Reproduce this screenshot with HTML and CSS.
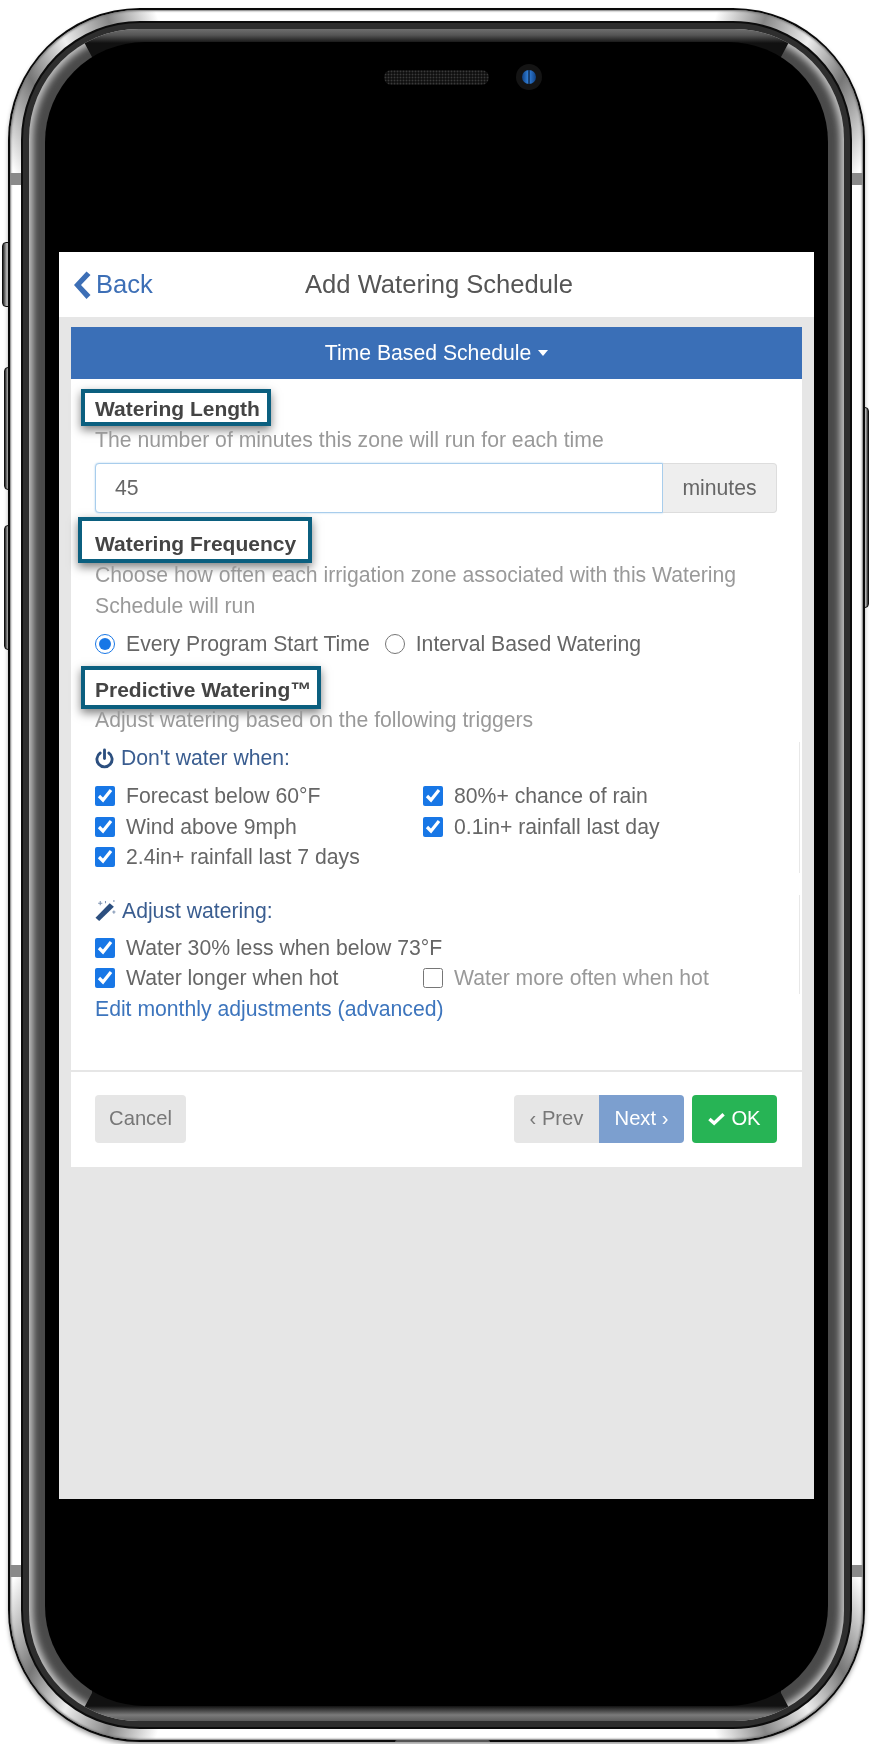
FILE: index.html
```html
<!DOCTYPE html>
<html lang="en">

<head>
	<meta charset="UTF-8">
	<meta name="viewport" content="width=device-width, initial-scale=1.0">
	<title>Add Watering Schedule</title>
	<link rel="stylesheet" href="styles.css">
</head>

<body>
	<div class="phone">
		<span class="side-btn side-btn-mute"></span>
		<span class="side-btn side-btn-up"></span>
		<span class="side-btn side-btn-down"></span>
		<span class="side-btn side-btn-power"></span>
		<div class="rim">
			<div class="band">
				<div class="glass">
					<div class="face">
						<div class="sensors">
							<span class="speaker"></span>
							<span class="camera"><span class="lens"></span></span>
						</div>
						<div class="screen">
							<header class="topbar">
								<a class="back">
									<svg class="back-icon" viewBox="0 0 18 28" aria-hidden="true">
										<path d="M13.5 0.5 L17.5 4 L8 14 L17.5 24 L13.5 28 L1 14 Z" />
									</svg>
									Back
								</a>
								<h1 class="title">Add Watering Schedule</h1>
								<span></span>
							</header>

							<div class="card">
								<div class="schedule-type">Time Based Schedule <span class="caret"></span></div>
								<div class="card-body">
									<h2 class="callout callout-length">Watering Length</h2>
									<p class="hint hint-length">The number of minutes this zone will run for each time</p>
									<div class="input-group">
										<input class="input" type="text" value="45">
										<span class="addon">minutes</span>
									</div>

									<h2 class="callout callout-frequency">Watering Frequency</h2>
									<p class="hint hint-frequency">Choose how often each irrigation zone associated with this Watering Schedule will run</p>
									<div class="radios">
										<label class="option"><input type="radio" name="freq" checked>Every Program Start Time</label>
										<label class="option"><input type="radio" name="freq">Interval Based Watering</label>
									</div>

									<h2 class="callout callout-predictive">Predictive Watering™</h2>
									<p class="hint hint-predictive">Adjust watering based on the following triggers</p>

									<section class="group">
										<h3 class="group-title">
											<svg class="group-icon" viewBox="0 0 20 22" aria-hidden="true">
												<path d="M10 2 V11" stroke-linecap="round" />
												<path d="M5.5 5.2 A8 8 0 1 0 14.5 5.2" stroke-linecap="round" />
											</svg>
											Don't water when:
										</h3>
										<div class="checks">
											<label class="option"><input type="checkbox" checked>Forecast below 60°F</label>
											<label class="option"><input type="checkbox" checked>80%+ chance of rain</label>
											<label class="option"><input type="checkbox" checked>Wind above 9mph</label>
											<label class="option"><input type="checkbox" checked>0.1in+ rainfall last day</label>
											<label class="option"><input type="checkbox" checked>2.4in+ rainfall last 7 days</label>
										</div>
									</section>

									<section class="group group-adjust">
										<h3 class="group-title">
											<svg class="wand-icon" viewBox="0 0 20 20" aria-hidden="true">
												<path class="wand" d="M0.5 17 L14 3 L18 6.5 L4 20 Z" />
												<path class="sparkle" d="M5 1 V5 M3 3 H7 M10 1 V3 M18 10 V13 M16.5 11.5 H19.5 M18 0 V2" />
											</svg>
											Adjust watering:
										</h3>
										<div class="checks">
											<label class="option option-wide"><input type="checkbox" checked>Water 30% less when below 73°F</label>
											<label class="option"><input type="checkbox" checked>Water longer when hot</label>
											<label class="option option-off"><input type="checkbox">Water more often when hot</label>
										</div>
									</section>

									<a class="monthly">Edit monthly adjustments (advanced)</a>
								</div>

								<footer class="card-footer">
									<button class="btn btn-plain btn-cancel" type="button">Cancel</button>
									<div class="nav-btns">
										<div class="btn-pair">
											<button class="btn btn-plain" type="button"><span class="angle">‹</span> Prev</button>
											<button class="btn btn-next" type="button">Next <span class="angle">›</span></button>
										</div>
										<button class="btn btn-ok" type="button">
											<svg class="ok-icon" viewBox="0 0 18 14" aria-hidden="true">
												<path d="M1.5 7 L6.5 11.5 L16.5 2" />
											</svg>
											OK
										</button>
									</div>
								</footer>
							</div>
						</div>
					</div>
				</div>
			</div>
		</div>
		<span class="antenna antenna-tl"></span>
		<span class="antenna antenna-tr"></span>
		<span class="antenna antenna-bl"></span>
		<span class="antenna antenna-br"></span>
		<span class="home-notch"></span>
	</div>
</body>

</html>
```

FILE: styles.css
```css
* {
	box-sizing: border-box;
}

html {
	font-size: 21.2px;
}

body {
	margin: 0;
	height: 1744px;
	overflow: hidden;
	background: #fff;
	font-family: "Liberation Sans", Arial, sans-serif;
	color: #666;
}

/* phone body, nested rings from the outside in */
.phone {
	position: relative;
	width: 857px;
	height: 1734px;
	margin: 8px 0 0 8px;
	padding: 2px;
	border-radius: 132px;
	background: #0a0a0a;
	box-shadow: 0 3px 5px -1px rgba(0, 0, 0, 0.45);
}

.rim {
	height: 100%;
	padding: 11px;
	border-radius: 130px;
	background: conic-gradient(#fff 0 18deg, #888 21deg, #eee 24deg, #777 27deg, #fff 31deg 149deg, #777 153deg, #eee 156deg, #888 159deg, #fff 162deg 198deg, #888 201deg, #eee 204deg, #777 207deg, #fff 211deg 329deg, #777 333deg, #eee 336deg, #888 339deg, #fff 342deg);
	box-shadow: inset 0 0 2px 1px #777;
}

.band {
	height: 100%;
	padding: 6px;
	border: 2px solid #0c0c0c;
	border-radius: 119px;
	background: #2e2e2e;
}

.glass {
	position: relative;
	height: 100%;
	padding: 13px 16px 15px;
	border-radius: 110px;
	overflow: hidden;
	background: #4a4a4a;
	box-shadow: inset 0 0 7px 4px #c4c4c4;
}

.glass::before,
.glass::after {
	content: "";
	position: absolute;
	left: 0;
	right: 0;
	height: 60px;
}

.glass::before {
	top: 0;
	background: linear-gradient(180deg, #6e6e6e 0, #555 6px, #111 14px);
	clip-path: polygon(48px 0, calc(100% - 48px) 0, calc(100% - 63px) 28px, calc(100% - 63px) 60px, 63px 60px, 63px 28px);
}

.glass::after {
	bottom: 0;
	background: linear-gradient(0deg, #5c5c5c 0, #7a7a7a 6px, #111 15px);
	clip-path: polygon(63px 0, calc(100% - 63px) 0, calc(100% - 63px) 32px, calc(100% - 48px) 100%, 48px 100%, 63px 32px);
}

.face {
	position: relative;
	z-index: 1;
	height: 100%;
	padding: 0 14px 208px;
	border-radius: 100px;
	background: #000;
}

.side-btn {
	position: absolute;
	z-index: -1;
	border-radius: 4px;
	background: linear-gradient(90deg, #222, #bbb 45%, #ccc 60%, #222);
	border: 1px solid #111;
}

.side-btn-mute {
	left: -6px;
	top: 234px;
	width: 10px;
	height: 65px;
}

.side-btn-up {
	left: -4px;
	top: 359px;
	width: 8px;
	height: 123px;
}

.side-btn-down {
	left: -4px;
	top: 517px;
	width: 8px;
	height: 125px;
}

.side-btn-power {
	right: -4px;
	top: 399px;
	width: 8px;
	height: 201px;
}

.antenna {
	position: absolute;
	width: 11px;
	height: 12px;
	background: #8a8a8a;
}

.antenna-tl {
	left: 2px;
	top: 165px;
}

.antenna-tr {
	right: 2px;
	top: 165px;
}

.antenna-bl {
	left: 2px;
	top: 1557px;
}

.antenna-br {
	right: 2px;
	top: 1557px;
}

.home-notch {
	position: absolute;
	left: 387px;
	bottom: 0;
	width: 95px;
	height: 2px;
	border-radius: 3px 3px 0 0;
	background: #555;
}

.sensors {
	display: flex;
	align-items: center;
	gap: 27px;
	height: 210px;
	padding: 22px 0 162px 325px;
}

.speaker {
	width: 105px;
	height: 15px;
	border-radius: 8px;
	background: radial-gradient(circle, #3a3a3a 0.8px, #111 1.1px) 0 0 / 3px 3px;
}

.camera {
	display: flex;
	align-items: center;
	justify-content: center;
	width: 26px;
	height: 26px;
	border-radius: 50%;
	background: #141414;
}

.lens {
	width: 14px;
	height: 14px;
	border-radius: 50%;
	background: linear-gradient(90deg, #0f3f80, #2f7ad0 40%, #0a2140 50%, #2a70c4 60%, #0f3f80);
}

/* app screen */
.screen {
	height: 1247px;
	background: #e6e6e6;
	filter: blur(0.35px);
}

.topbar {
	display: grid;
	grid-template-columns: 1fr auto 1fr;
	align-items: center;
	height: 65px;
	padding: 0 9px 0 14px;
	background: #fff;
}

.back {
	display: flex;
	align-items: center;
	gap: 5px;
	font-size: 25.6px;
	color: #3d6fb6;
}

.back-icon {
	width: 18px;
	height: 28px;
	fill: #3d6fb6;
}

.title {
	margin: 0;
	font-size: 25.6px;
	font-weight: normal;
	color: #555;
}

.card {
	margin: 10px 12px 0;
	background: #fff;
}

.schedule-type {
	display: flex;
	align-items: center;
	justify-content: center;
	gap: 7px;
	height: 52px;
	background: #3a6fb7;
	color: #fff;
}

.caret {
	width: 0;
	height: 0;
	border-top: 6px solid #fff;
	border-left: 5px solid transparent;
	border-right: 5px solid transparent;
}

.card-body {
	padding: 0 25px 0 24px;
}

.callout {
	display: table;
	margin: 0;
	border: 4px solid #0b5f7f;
	font-size: 21px;
	font-weight: bold;
	line-height: 29px;
	color: #444;
	box-shadow: 0 4px 9px rgba(0, 0, 0, 0.5);
}

.callout-length {
	margin: 10px 0 0 -14px;
	padding: 2px 7px 0 10px;
	line-height: 27px;
}

.callout-frequency {
	margin: 4px 0 0 -17px;
	padding: 8px 12px 1px 13px;
}

.callout-predictive {
	margin: 7px 0 0 -14px;
	padding: 5px 6px 1px 10px;
}

.hint {
	margin: 0;
	line-height: 30px;
	color: #999;
}

.hint-length {
	margin-top: -1px;
}

.hint-frequency {
	margin-top: -4px;
	line-height: 31px;
}

.hint-predictive {
	margin-top: -4px;
}

.input-group {
	display: flex;
	height: 50px;
	margin-top: 8px;
}

.input {
	flex: 1;
	min-width: 0;
	padding: 0 19px;
	border: 1px solid #a8cdec;
	border-radius: 4px 0 0 4px;
	font: inherit;
	color: #666;
	outline: 0;
	box-shadow: 0 0 2px #a8cdec;
}

.addon {
	display: flex;
	align-items: center;
	justify-content: center;
	width: 114px;
	border: 1px solid #ddd;
	border-left: 0;
	border-radius: 0 4px 4px 0;
	background: #eee;
}

.radios {
	display: flex;
	gap: 15px;
	height: 30px;
	margin-top: 8px;
}

.option {
	display: flex;
	align-items: center;
	height: 30.5px;
	white-space: nowrap;
}

.option input {
	flex: none;
	width: 20px;
	height: 20px;
	margin: 0 11px 0 0;
	accent-color: #1877e6;
}

.option-wide {
	grid-column: 1 / -1;
}

.option-off {
	color: #999;
}

.group {
	margin: 7px -23px 0 0;
	padding-top: 1px;
	border-right: 1px solid #e8e8e8;
}

.group-adjust {
	margin-top: 22px;
}

.group-title {
	display: flex;
	align-items: center;
	gap: 7px;
	height: 30px;
	margin: 0 0 8px;
	font-size: 21.2px;
	font-weight: normal;
	color: #3a5d90;
}

.group-adjust .group-title {
	margin-bottom: 7px;
}

.group-icon {
	width: 19px;
	height: 21px;
	fill: none;
	stroke: #2c4f7f;
	stroke-width: 3;
}

.wand-icon {
	width: 21px;
	height: 21px;
	margin-right: -1px;
}

.wand {
	fill: #2c4f7f;
}

.sparkle {
	fill: none;
	stroke: #7e93b3;
	stroke-width: 1;
}

.checks {
	display: grid;
	grid-template-columns: 328px 1fr;
}

.monthly {
	display: block;
	height: 30px;
	line-height: 30px;
	color: #3d75bd;
}

.card-footer {
	display: flex;
	justify-content: space-between;
	margin-top: 46px;
	padding: 23px 25px 24px 24px;
	border-top: 2px solid #e6e6e6;
}

.nav-btns {
	display: flex;
	gap: 8px;
}

.btn-pair {
	display: flex;
}

.btn {
	height: 48px;
	padding: 0;
	border: 0;
	border-radius: 4px;
	font: inherit;
	font-size: 20.2px;
}

.btn-plain {
	background: #e6e6e6;
	color: #777;
}

.btn-cancel {
	width: 91px;
}

.btn-pair .btn {
	width: 85px;
}

.btn-pair .btn-plain {
	border-radius: 4px 0 0 4px;
}

.btn-next {
	border-radius: 0 4px 4px 0;
	background: #7c9fcf;
	color: #fff;
}

.btn-ok {
	display: flex;
	align-items: center;
	justify-content: center;
	gap: 6px;
	width: 85px;
	background: #27b455;
	color: #fff;
}

.ok-icon {
	width: 17px;
	height: 14px;
	fill: none;
	stroke: #fff;
	stroke-width: 3.6;
}
```
